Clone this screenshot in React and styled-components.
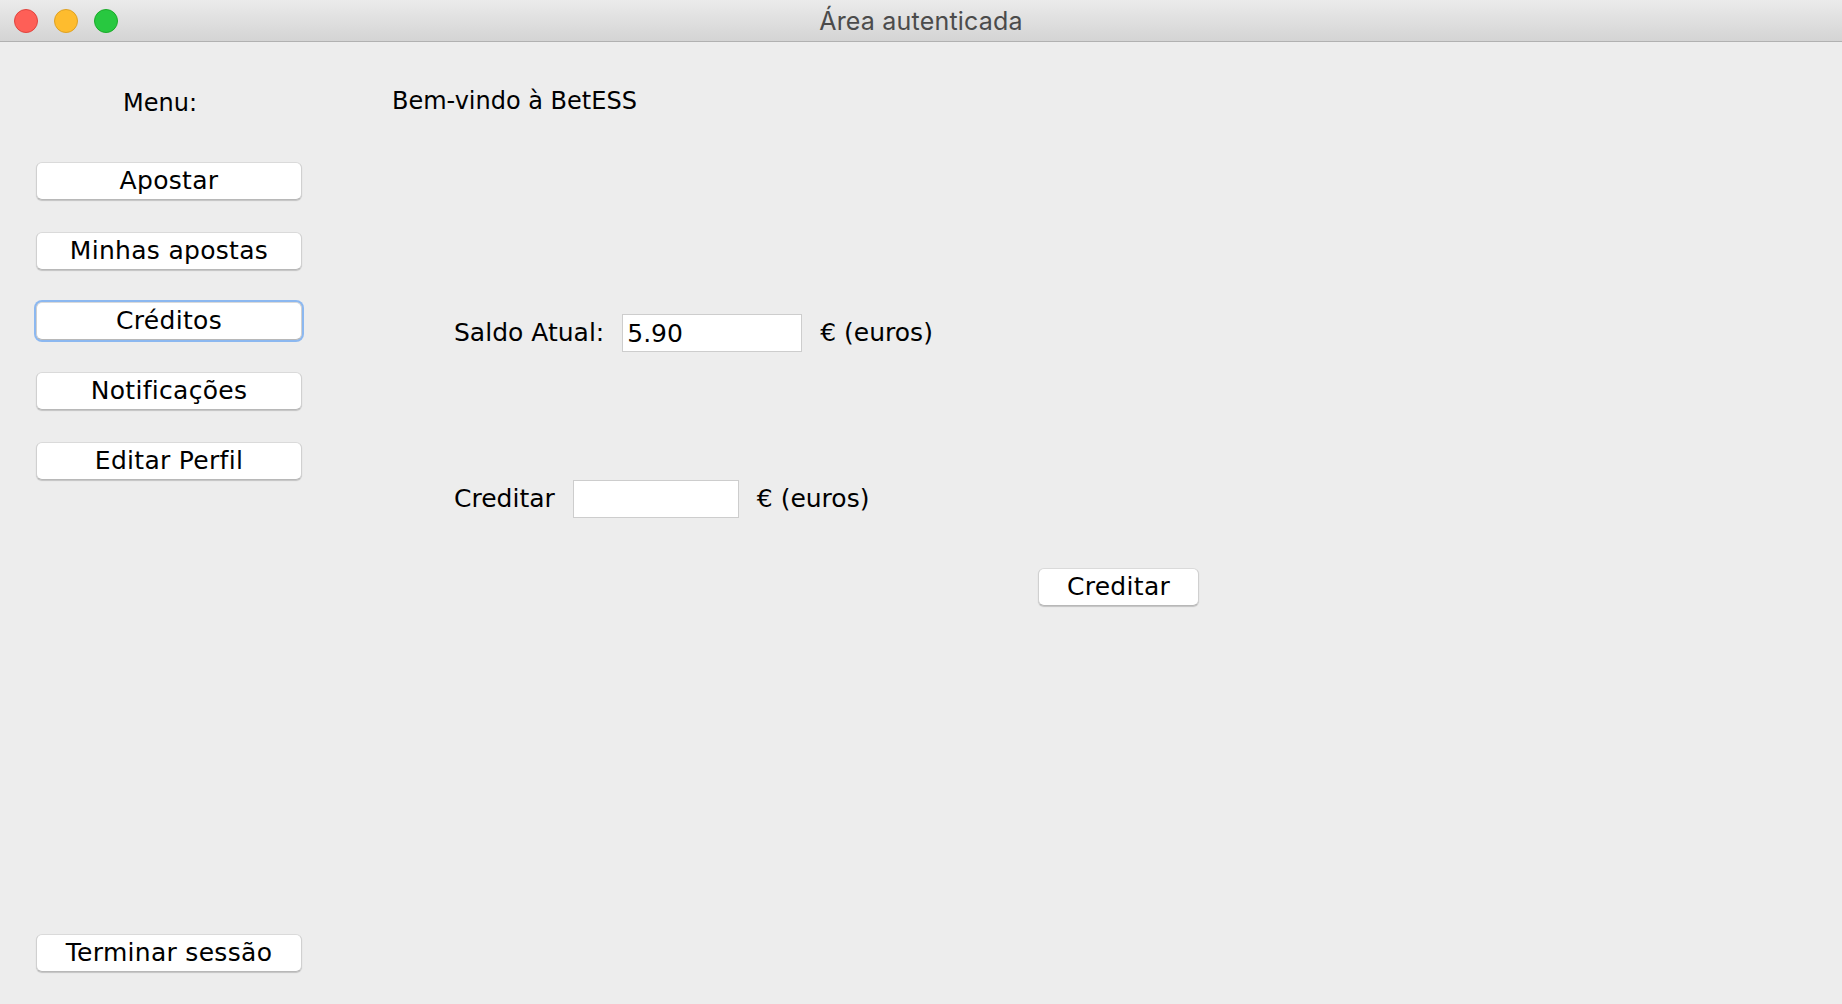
import React from 'react';
import styled, { createGlobalStyle } from 'styled-components';

const GlobalStyle = createGlobalStyle`
  html, body {
    margin: 0;
    padding: 0;
    background: #ededed;
  }
  body {
    font-family: "DejaVu Sans", "Liberation Sans", sans-serif;
    color: #000;
  }
`;

const menuItems = ['Apostar', 'Minhas apostas', 'Créditos', 'Notificações', 'Editar Perfil'];

export default function App() {
  return (
    <>
      <GlobalStyle />
      <Window>
        <TitleBar>
          <Lights>
            <Light color="#fe5f57" edge="#e0443e" />
            <Light color="#febc2e" edge="#dea123" />
            <Light color="#28c840" edge="#1aab29" />
          </Lights>
          <Title>Área autenticada</Title>
          <span />
        </TitleBar>
        <Body>
          <Sidebar>
            <MenuLabel>Menu:</MenuLabel>
            <MenuList>
              {menuItems.map((item) => (
                <Button key={item} focused={item === 'Créditos'}>
                  {item}
                </Button>
              ))}
            </MenuList>
            <LogoutButton>Terminar sessão</LogoutButton>
          </Sidebar>
          <Main>
            <Welcome>Bem-vindo à BetESS</Welcome>
            <FormRow top={199}>
              <Label>Saldo Atual:</Label>
              <Field width={180} readOnly value="5.90" />
              <Unit>€ (euros)</Unit>
            </FormRow>
            <FormRow top={128}>
              <Label>Creditar</Label>
              <Field width={166} defaultValue="" />
              <Unit>€ (euros)</Unit>
            </FormRow>
            <ActionRow>
              <Button width={161}>Creditar</Button>
            </ActionRow>
          </Main>
        </Body>
      </Window>
    </>
  );
}

const Window = styled.div`
  display: flex;
  flex-direction: column;
  height: 100vh;
  background: #ededed;
`;

const TitleBar = styled.div`
  height: 41px;
  flex-shrink: 0;
  display: grid;
  grid-template-columns: 1fr auto 1fr;
  align-items: center;
  padding: 0 14px;
  background: linear-gradient(#ebebeb, #d4d4d4);
  border-bottom: 1px solid #b1b1b1;
`;

const Lights = styled.div`
  display: flex;
  gap: 16px;
`;

const Light = styled.span`
  box-sizing: border-box;
  width: 24px;
  height: 24px;
  border-radius: 50%;
  background: ${(p) => p.color};
  border: 1px solid ${(p) => p.edge};
`;

const Title = styled.div`
  font-family: Inter, "Liberation Sans", sans-serif;
  font-size: 25px;
  color: #4b4b4b;
  letter-spacing: 0.2px;
`;

const Body = styled.div`
  flex: 1;
  display: flex;
`;

const Sidebar = styled.div`
  width: 266px;
  display: flex;
  flex-direction: column;
  padding: 47px 0 32px 36px;
`;

const MenuLabel = styled.div`
  font-size: 24px;
  line-height: 28px;
  padding-left: 87px;
`;

const MenuList = styled.div`
  display: flex;
  flex-direction: column;
  gap: 32px;
  margin-top: 45px;
`;

const Button = styled.button`
  box-sizing: border-box;
  width: ${(p) => (p.width ? `${p.width}px` : '100%')};
  height: 38px;
  padding: 0;
  background: #fff;
  border: 1px solid #d0d0d0;
  border-top-color: #dadada;
  border-bottom-color: #b8b8b8;
  border-radius: 6px;
  box-shadow: ${(p) =>
    p.focused
      ? '0 0 0 2px #8cb8f0'
      : '0 1px 1px rgba(0, 0, 0, 0.18)'};
  font-family: "DejaVu Sans", "Liberation Sans", sans-serif;
  font-size: 25px;
  line-height: 28px;
  letter-spacing: 0.3px;
  color: #000;
  cursor: pointer;
`;

const LogoutButton = styled(Button)`
  margin-top: auto;
`;

const Main = styled.div`
  flex: 1;
  display: flex;
  flex-direction: column;
  padding: 45px 0 0 90px;
`;

const Welcome = styled.div`
  font-size: 24px;
  line-height: 28px;
`;

const FormRow = styled.div`
  display: flex;
  align-items: center;
  margin-top: ${(p) => p.top}px;
  padding-left: 62px;
  font-size: 25px;
  line-height: 28px;
`;

const Label = styled.span`
  margin-right: 18px;
`;

const Field = styled.input`
  box-sizing: border-box;
  width: ${(p) => p.width}px;
  height: 38px;
  margin: 0 18px 0 0;
  padding: 0 4px;
  background: #fff;
  border: 1px solid #cdcdcd;
  border-radius: 0;
  outline: none;
  font-family: "DejaVu Sans", "Liberation Sans", sans-serif;
  font-size: 25px;
  color: #000;
`;

const Unit = styled.span``;

const ActionRow = styled.div`
  display: flex;
  margin-top: 50px;
  padding-left: 646px;
`;
